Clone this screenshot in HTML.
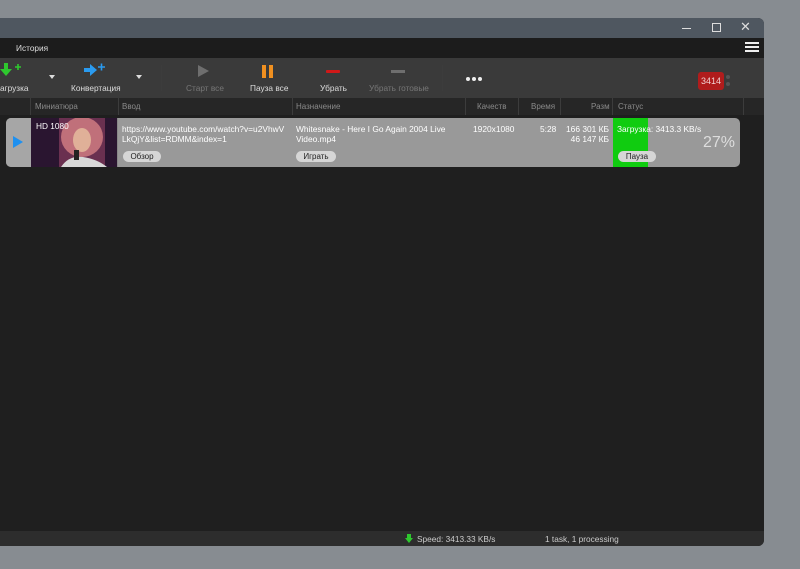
<!DOCTYPE html>
<html><head><meta charset="utf-8"><style>
*{margin:0;padding:0;box-sizing:border-box}
body{width:800px;height:569px;overflow:hidden;background:#878c91;font-family:"Liberation Sans",sans-serif;position:relative;font-size:8px}
.abs{position:absolute}
#win{left:0;top:18px;width:764px;height:528px;background:#1f1f1f;border-radius:0 6px 6px 0;overflow:hidden}
#title{left:0;top:0;width:764px;height:20px;background:#4f5760}
#menu{left:0;top:20px;width:764px;height:20px;background:#1c1c1c;color:#ddd}
#tool{left:0;top:40px;width:764px;height:40px;background:#3a3a3a}
#hdr{left:0;top:80px;width:764px;height:17px;background:#262626;color:#8a8a8a}
.lbl{font-size:8.3px;color:#ddd;white-space:nowrap}
.dim{color:#777}
.sep{width:1px;background:#3c3c3c}
#row{left:6px;top:100px;width:734px;height:49px;background:#999;border-radius:5px;overflow:hidden;font-size:8.4px}
.btn{background:#d6d6d6;color:#222;border-radius:6px;font-size:8px;text-align:center;height:11px;line-height:11px}
#status{left:0;top:513px;width:764px;height:15px;background:#2d2d2d;color:#ccc;font-size:8.3px}
</style></head><body>
<div id="win" class="abs">
 <div id="title" class="abs">
  <div class="abs" style="left:682px;top:10px;width:9px;height:1px;background:#ddd"></div>
  <div class="abs" style="left:712px;top:5px;width:9px;height:9px;border:1px solid #ddd"></div>
  <div class="abs" style="left:740px;top:1px;color:#ddd;font-size:13px">✕</div>
 </div>
 <div id="menu" class="abs">
  <div class="abs" style="left:16px;top:5px;font-size:8.3px">История</div>
  <div class="abs" style="left:745px;top:4px;width:14px;height:2px;background:#eee;box-shadow:0 4px 0 #eee,0 8px 0 #eee"></div>
 </div>
 <div id="tool" class="abs">
  <svg class="abs" style="left:0;top:5px" width="22" height="14"><path d="M4 0v6H0l6 7 6-7H8V0z" fill="#2ec82e"/><path d="M15 4h6M18 1v6" stroke="#2ec82e" stroke-width="1.6"/></svg>
  <div class="abs lbl" style="left:0;top:25px">агрузка</div>
  <div class="abs" style="left:49px;top:17px;border:3px solid transparent;border-top:4px solid #ddd"></div>
  <svg class="abs" style="left:84px;top:5px" width="24" height="14"><path d="M0 5h6V1l7 6-7 6V9H0z" fill="#2a9bf0"/><path d="M14 4h7M17.5 0.5v7" stroke="#2a9bf0" stroke-width="1.6"/></svg>
  <div class="abs lbl" style="left:71px;top:25px">Конвертация</div>
  <div class="abs" style="left:136px;top:17px;border:3px solid transparent;border-top:4px solid #ddd"></div>
  <div class="abs sep" style="left:161px;top:7px;height:26px"></div>
  <div class="abs" style="left:198px;top:7px;border:6px solid transparent;border-left:11px solid #6e6e6e;border-right:0"></div>
  <div class="abs lbl dim" style="left:186px;top:25px">Старт все</div>
  <div class="abs" style="left:262px;top:7px;width:4px;height:13px;background:#f09020;box-shadow:7px 0 0 #f09020"></div>
  <div class="abs lbl" style="left:250px;top:25px">Пауза все</div>
  <div class="abs" style="left:326px;top:12px;width:14px;height:3px;background:#d01818;border-radius:1px"></div>
  <div class="abs lbl" style="left:320px;top:25px">Убрать</div>
  <div class="abs" style="left:391px;top:12px;width:14px;height:3px;background:#6e6e6e"></div>
  <div class="abs lbl dim" style="left:369px;top:25px">Убрать готовые</div>
  <div class="abs sep" style="left:442px;top:7px;height:26px"></div>
  <div class="abs" style="left:466px;top:19px;width:4px;height:4px;border-radius:2px;background:#eee;box-shadow:6px 0 0 #eee,12px 0 0 #eee"></div>
  <div class="abs" style="left:698px;top:14px;width:26px;height:18px;background:#b01c1c;border-radius:3px;color:#f0d0d0;font-size:9px;text-align:center;line-height:18px">3414</div>
  <div class="abs" style="left:726px;top:17px;width:4px;height:4px;border-radius:2px;background:#555;box-shadow:0 7px 0 #555"></div>
 </div>
 <div id="hdr" class="abs">
  <div class="abs sep" style="left:30px;top:0;height:17px"></div><div class="abs" style="left:35px;top:4px">Миниатюра</div>
  <div class="abs sep" style="left:118px;top:0;height:17px"></div><div class="abs" style="left:122px;top:4px">Ввод</div>
  <div class="abs sep" style="left:292px;top:0;height:17px"></div><div class="abs" style="left:296px;top:4px">Назначение</div>
  <div class="abs sep" style="left:465px;top:0;height:17px"></div><div class="abs" style="left:477px;top:4px">Качеств</div>
  <div class="abs sep" style="left:518px;top:0;height:17px"></div><div class="abs" style="left:531px;top:4px">Время</div>
  <div class="abs sep" style="left:560px;top:0;height:17px"></div><div class="abs" style="left:591px;top:4px">Разм</div>
  <div class="abs sep" style="left:612px;top:0;height:17px"></div><div class="abs" style="left:618px;top:4px">Статус</div>
  <div class="abs sep" style="left:743px;top:0;height:17px"></div>
 </div>
 <div id="row" class="abs">
  <div class="abs" style="left:0;top:0;width:25px;height:49px;background:#a6a6a6"></div>
  <div class="abs" style="left:7px;top:18px;border:6px solid transparent;border-left:10px solid #1e90f0;border-right:0"></div>
  <svg class="abs" style="left:25px;top:0" width="86" height="49"><rect width="86" height="49" fill="#2a1530"/><rect x="28" width="46" height="49" fill="#6a3050"/><ellipse cx="51" cy="19" rx="21" ry="20" fill="#c0707a"/><ellipse cx="51" cy="22" rx="9" ry="12" fill="#e0b098"/><path d="M30 49q8-12 22-10t24 10z" fill="#d8d8d8"/><rect x="43" y="32" width="5" height="10" fill="#222"/><text x="5" y="11" font-size="8.3" fill="#fff" font-family="Liberation Sans">HD 1080</text></svg>
  <div class="abs" style="left:111px;top:0;width:1px;height:49px;background:#888"></div>
  <div class="abs" style="left:116px;top:6px;color:#fff;line-height:10px">https://www.youtube.com/watch?v=u2VhwV<br>LkQjY&amp;list=RDMM&amp;index=1</div>
  <div class="abs btn" style="left:117px;top:33px;width:38px">Обзор</div>
  <div class="abs" style="left:290px;top:6px;color:#fff;line-height:10px">Whitesnake - Here I Go Again 2004 Live<br>Video.mp4</div>
  <div class="abs btn" style="left:290px;top:33px;width:40px">Играть</div>
  <div class="abs" style="left:467px;top:6px;color:#fff">1920x1080</div>
  <div class="abs" style="left:534px;top:6px;color:#fff">5:28</div>
  <div class="abs" style="left:558px;top:6px;color:#fff;line-height:10px;text-align:right;width:45px">166 301 КБ<br>46 147 КБ</div>
  <div class="abs" style="left:607px;top:0;width:35px;height:49px;background:#10cc10"></div>
  <div class="abs" style="left:611px;top:6px;color:#fff">Загрузка: 3413.3 KB/s</div>
  <div class="abs btn" style="left:612px;top:33px;width:38px">Пауза</div>
  <div class="abs" style="left:697px;top:16px;color:#ddd;font-size:16px">27%</div>
 </div>
 <div id="status" class="abs">
  <svg class="abs" style="left:405px;top:3px" width="8" height="9"><path d="M2 0h4v4h2L4 9 0 4h2z" fill="#2ec82e"/></svg>
  <div class="abs" style="left:417px;top:3px">Speed: 3413.33 KB/s</div>
  <div class="abs" style="left:545px;top:3px">1 task, 1 processing</div>
 </div>
</div>
</body></html>
